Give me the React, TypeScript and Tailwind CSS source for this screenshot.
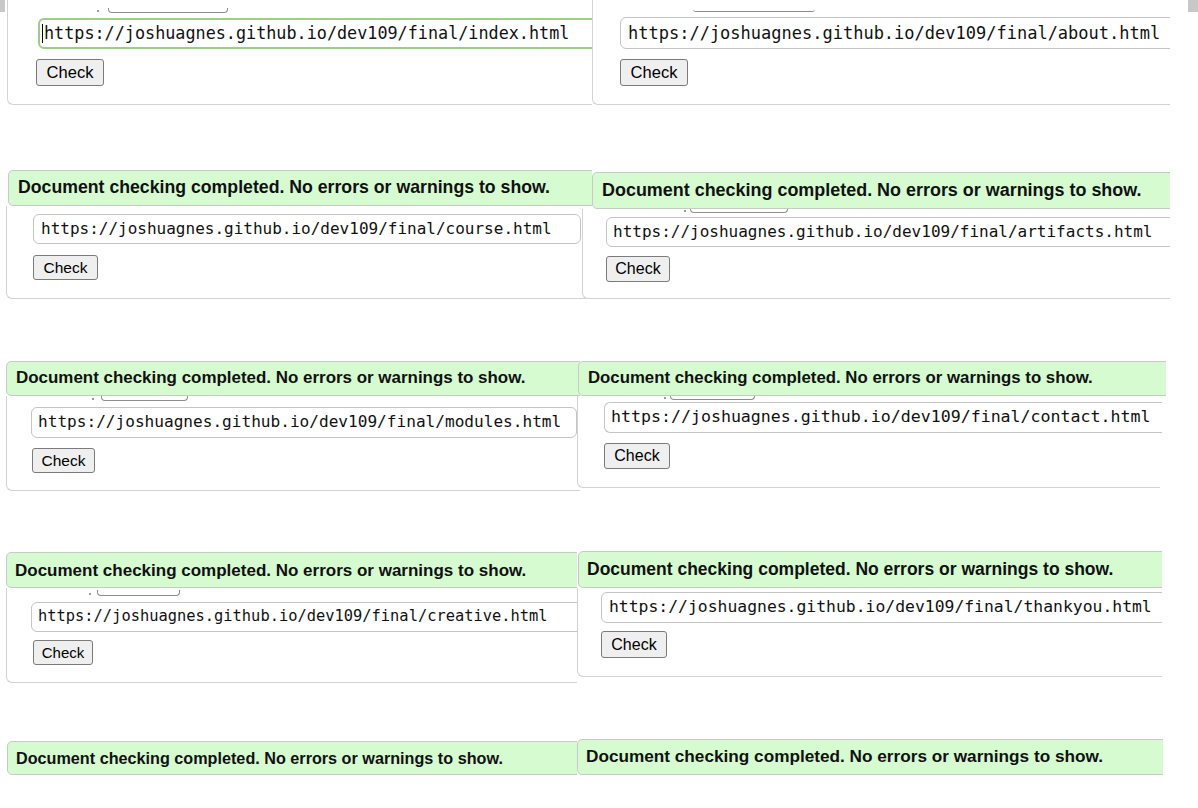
import React from "react";

const MSG = "Document checking completed. No errors or warnings to show.";
const SANS = "font-['Liberation_Sans',Arial,Helvetica,sans-serif]";
const MONO = "font-['DejaVu_Sans_Mono',Menlo,monospace]";

function Bar({ className }: { className: string }) {
  return (
    <div
      className={`flex items-center whitespace-nowrap rounded-l-[5px] border border-[#c9c9c9] bg-[#d6fbd1] font-bold leading-none text-[#111] ${SANS} ${className}`}
    >
      {MSG}
    </div>
  );
}

function Card({ className, children }: { className: string; children: React.ReactNode }) {
  return (
    <div className={`flex flex-col items-start rounded-bl-[6px] border-b border-l border-[#d3d3d3] bg-white ${className}`}>
      {children}
    </div>
  );
}

function Stub({ className, dot, stub }: { className: string; dot: string; stub: string }) {
  return (
    <div className={`flex shrink-0 items-end ${className}`}>
      <div className={`mb-[1px] h-[2px] w-[2px] rounded-full bg-[#7a7a7a] ${dot}`} />
      <div className={`rounded-b-[4px] border-x border-b border-[#8e8e8e] ${stub}`} />
    </div>
  );
}

function Url({
  className,
  url,
  focus,
  cut,
}: {
  className: string;
  url: string;
  focus?: boolean;
  cut?: boolean;
}) {
  return (
    <div
      className={`flex shrink-0 items-center overflow-hidden whitespace-nowrap rounded-[6px] bg-white leading-none text-[#111] ${MONO} ${
        focus ? "border-2 border-[#9ccd89]" : "border border-[#c4c4c4]"
      } ${cut ? "rounded-r-none border-r-0" : ""} ${className}`}
    >
      {focus && <span className="mr-[1px] h-[19px] w-[1px] shrink-0 bg-black" />}
      {url}
    </div>
  );
}

function Check({ className }: { className: string }) {
  return (
    <button
      type="button"
      className={`flex shrink-0 items-center justify-center rounded-[3px] border border-[#7b7b7b] bg-[#efefef] leading-none text-black ${SANS} ${className}`}
    >
      Check
    </button>
  );
}

const BASE = "https://joshuagnes.github.io/dev109/final/";

export default function App() {
  return (
    <div className="h-[808px] w-[1198px] overflow-hidden bg-white">
      {/* Row 1 */}
      <div className="flex h-[106px]">
        <div className="relative h-[106px] w-[592px] shrink-0 overflow-hidden">
          <div className="absolute left-0 top-0 h-[12px] w-[5px] bg-[#c8c8c8]" />
          <Card className="ml-[7px] h-[105px] w-[640px] pl-[28px]">
            <Stub className="mt-[8px]" dot="ml-[61px]" stub="ml-[9px] h-[5px] w-[120px]" />
            <Url className="mt-[5px] ml-[2px] h-[31px] w-[600px] pl-[2px] text-[16.8px]" url={BASE + "index.html"} focus />
            <Check className="mt-[10px] h-[27px] w-[68px] text-[16.5px]" />
          </Card>
        </div>
        <div className="relative h-[106px] w-[578px] shrink-0 overflow-hidden">
          <Card className="h-[105px] w-[640px] pl-[27px]">
            <div className="mt-[9px] ml-[73px] h-[3px] w-[122px] rounded-b-[3px] border-b border-[#8e8e8e]" />
            <Url className="mt-[5px] h-[32px] w-[600px] pl-[7px] text-[17px]" url={BASE + "about.html"} />
            <Check className="mt-[10px] h-[27px] w-[68px] text-[16.5px]" />
          </Card>
        </div>
        <div className="flex-1">
          <div className="ml-[18px] h-[12px] w-[10px] bg-[#c8c8c8]" />
        </div>
      </div>

      {/* Row 2 */}
      <div className="mt-[62px] flex h-[134px]">
        <div className="h-[134px] w-[592px] shrink-0 overflow-hidden">
          <Bar className="mt-[2px] ml-[8px] h-[36px] w-[620px] pl-[9px] text-[17.7px]" />
          <Card className="ml-[6px] h-[93px] w-[640px] pl-[26px]">
            <Url className="mt-[8px] h-[30px] w-[548px] pl-[7px] text-[16px]" url={BASE + "course.html"} />
            <Check className="mt-[11px] h-[25px] w-[65px] text-[15.5px]" />
          </Card>
        </div>
        <div className="relative -ml-[10px] h-[134px] w-[588px] shrink-0 overflow-hidden">
          <Bar className="mt-[4px] ml-[10px] h-[37px] w-[600px] pl-[9px] text-[17.95px]" />
          <Card className="h-[90px] w-[640px] pl-[23px]">
            <Stub className="mt-0" dot="ml-[78px]" stub="ml-[4px] h-[4px] w-[98px]" />
            <Url className="mt-[4px] h-[30px] w-[600px] pl-[6px] text-[16px]" url={BASE + "artifacts.html"} />
            <Check className="mt-[9px] h-[26px] w-[64px] text-[16px]" />
          </Card>
        </div>
      </div>

      {/* Row 3 */}
      <div className="mt-[56px] flex h-[134px]">
        <div className="h-[134px] w-[580px] shrink-0 overflow-hidden">
          <Bar className="mt-[3px] ml-[6px] h-[35px] w-[620px] pl-[9px] text-[16.95px]" />
          <Card className="ml-[6px] h-[95px] w-[640px] pl-[24px]">
            <Stub className="mt-0" dot="ml-[61px]" stub="ml-[7px] h-[5px] w-[87px]" />
            <Url className="mt-[6px] h-[31px] w-[546px] pl-[6px] text-[16.1px]" url={BASE + "modules.html"} />
            <Check className="mt-[10px] ml-[1px] h-[25px] w-[63px] text-[15.5px]" />
          </Card>
        </div>
        <div className="relative -ml-[3px] h-[134px] w-[589px] shrink-0 overflow-hidden">
          <Bar className="mt-[3px] ml-[1px] h-[35px] w-[600px] pl-[9px] text-[16.8px]" />
          <Card className="h-[92px] w-[583px] pl-[26px]">
            <Stub className="mt-0" dot="ml-[60px]" stub="ml-[4px] h-[4px] w-[85px]" />
            <Url className="mt-[2px] h-[31px] w-[558px] pl-[6px] text-[16.6px]" url={BASE + "contact.html"} cut />
            <Check className="mt-[10px] h-[26px] w-[66px] text-[16px]" />
          </Card>
        </div>
      </div>

      {/* Row 4 */}
      <div className="mt-[56px] flex h-[136px]">
        <div className="h-[136px] w-[577px] shrink-0 overflow-hidden">
          <Bar className="mt-[4px] ml-[6px] h-[36px] w-[620px] pl-[8px] text-[17px]" />
          <Card className="ml-[6px] h-[95px] w-[640px] pl-[24px]">
            <Stub className="mt-[2px]" dot="ml-[58px]" stub="ml-[6px] h-[6px] w-[83px]" />
            <Url className="mt-[6px] h-[30px] w-[560px] pl-[6px] text-[15.4px]" url={BASE + "creative.html"} />
            <Check className="mt-[8px] ml-[2px] h-[25px] w-[60px] text-[15px]" />
          </Card>
        </div>
        <div className="relative h-[136px] w-[585px] shrink-0 overflow-hidden">
          <Bar className="mt-[3px] ml-[1px] h-[37px] w-[600px] pl-[8px] text-[17.5px]" />
          <Card className="h-[89px] w-[600px] pl-[23px]">
            <Url className="mt-[4px] h-[31px] w-[580px] pl-[7px] text-[16.4px]" url={BASE + "thankyou.html"} />
            <Check className="mt-[8px] h-[27px] w-[66px] text-[16px]" />
          </Card>
        </div>
      </div>

      {/* Row 5 */}
      <div className="mt-[52px] flex h-[40px]">
        <div className="h-[40px] w-[577px] shrink-0 overflow-hidden">
          <Bar className="mt-[5px] ml-[7px] h-[34px] w-[620px] pl-[8px] text-[16.2px]" />
        </div>
        <div className="relative h-[40px] w-[586px] shrink-0 overflow-hidden">
          <Bar className="mt-[3px] h-[36px] w-[600px] pl-[8px] text-[17.2px]" />
        </div>
      </div>
    </div>
  );
}
